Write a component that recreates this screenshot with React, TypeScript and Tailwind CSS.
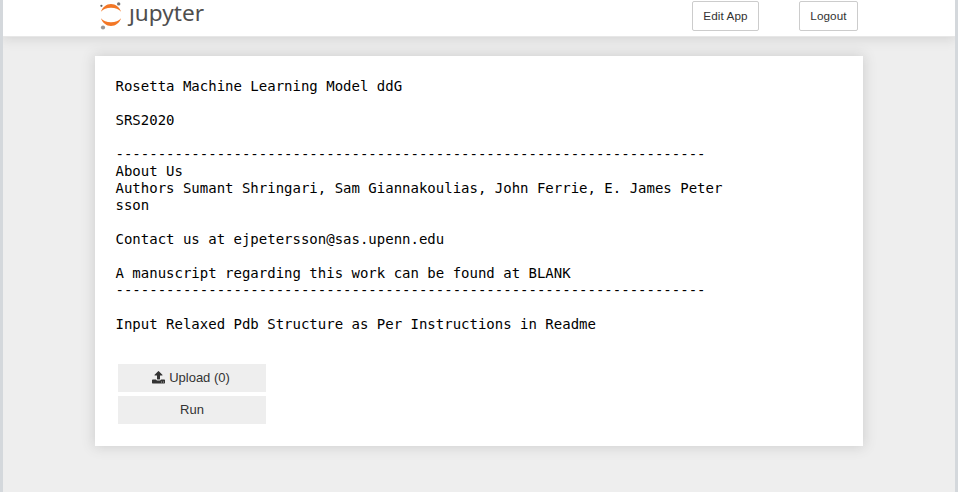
const SANS = "font-['Liberation_Sans',Arial,sans-serif]";

const RULE = '-'.repeat(70);

const INTRO = `Rosetta Machine Learning Model ddG

SRS2020

${RULE}
About Us
Authors Sumant Shringari, Sam Giannakoulias, John Ferrie, E. James Petersson

Contact us at ejpetersson@sas.upenn.edu

A manuscript regarding this work can be found at BLANK
${RULE}

Input Relaxed Pdb Structure as Per Instructions in Readme`;

function JupyterLogo() {
  return (
    <svg className="block h-[36px] w-[114px] overflow-visible" viewBox="0 0 114 36" aria-label="jupyter">
      <path fill="#f37726" d="M1 11.800C2.500 7.200 6.300 4.100 11 4.100S19.500 7.200 21 11.800C18.900 9.200 15.200 7.800 11 7.800S3.100 9.200 1 11.800Z" />
      <path fill="#f37726" d="M1 18.200C2.500 22.800 6.300 25.900 11 25.900S19.500 22.800 21 18.200C18.900 20.800 15.200 22.200 11 22.200S3.100 20.800 1 18.200Z" />
      <circle cx="1.400" cy="5.800" r="1.100" fill="#616262" />
      <circle cx="18.700" cy="3.900" r="1.700" fill="#767677" />
      <circle cx="3" cy="27.500" r="2.100" fill="#989798" />
      <text x="29" y="21.300" fill="#4e4e4e" fontSize="22.500" textLength="75" lengthAdjust="spacingAndGlyphs" fontFamily="'Noto Sans', 'Open Sans', sans-serif">
        ȷupyter
      </text>
    </svg>
  );
}

function UploadIcon() {
  return (
    <svg className="-ml-0.5 -mt-0.5 mr-1 h-[13px] w-[13px] overflow-visible" viewBox="64 128 1664 1536" fill="currentColor">
      <path d="M1344 1472q0-26-19-45t-45-19-45 19-19 45 19 45 45 19 45-19 19-45zm256 0q0-26-19-45t-45-19-45 19-19 45 19 45 45 19 45-19 19-45zm128-224v320q0 40-28 68t-68 28h-1472q-40 0-68-28t-28-68v-320q0-40 28-68t68-28h427q21 56 70.5 92t110.500 36h256q61 0 110.500-36t70.500-92h427q40 0 68 28t28 68zm-325-648q-17 40-59 40h-256v448q0 26-19 45t-45 19h-256q-26 0-45-19t-19-45v-448h-256q-42 0-59-40-17-39 14-69l448-448q18-19 45-19t45 19l448 448q31 30 14 69z" />
    </svg>
  );
}

export default function App() {
  return (
    <div className={`flex h-[492px] w-[958px] flex-col overflow-hidden border-x-[3px] border-[#d4d8dc] bg-[#eee] ${SANS}`}>
      <header className="relative z-10 flex h-[37px] shrink-0 items-start border-b border-[#e7e7e7] bg-white pl-[97px] pr-[97px] shadow-[0_0_12px_1px_rgba(87,87,87,0.2)]">
        <JupyterLogo />
        <nav className="ml-auto mt-px flex gap-[40px] text-[11.700px] leading-[18px] tracking-[0.100px] text-[#333]">
          <button className="h-[30px] w-[67px] rounded-[2px] border border-[#ccc] bg-white">Edit App</button>
          <button className="h-[30px] w-[59px] rounded-[2px] border border-[#ccc] bg-white">Logout</button>
        </nav>
      </header>
      <main className="ml-[92px] mt-[19px] h-[390px] w-[768px] shrink-0 bg-white pl-[20.500px] pt-[22px] shadow-[0_0_12px_1px_rgba(87,87,87,0.2)]">
        <pre className="w-[614px] whitespace-pre-wrap break-all font-['DejaVu_Sans_Mono',monospace] text-[14px] leading-[17px] text-black">{INTRO}</pre>
        <div className="ml-[2.500px] mt-[31px] flex w-[148px] flex-col gap-1 text-[13px] text-[#333]">
          <button className="flex h-7 items-center justify-center bg-[#eee]">
            <UploadIcon />
            Upload (0)
          </button>
          <button className="h-7 bg-[#eee]">Run</button>
        </div>
      </main>
    </div>
  );
}
